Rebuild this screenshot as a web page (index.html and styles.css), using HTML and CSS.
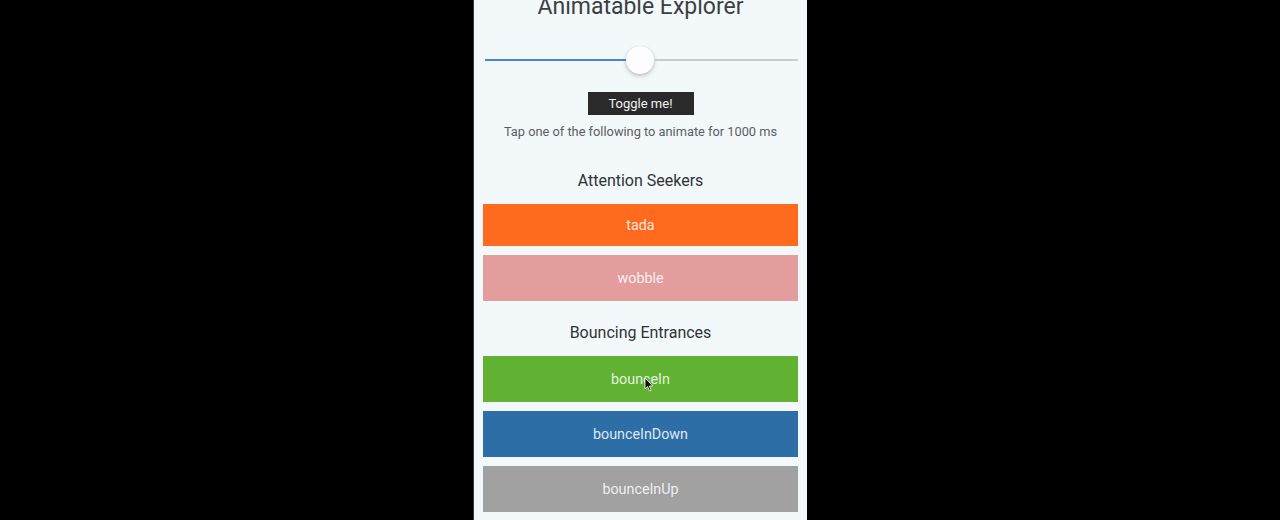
FILE: index.html
```html
<!DOCTYPE html>
<html lang="en">
<head>
    <meta charset="UTF-8">
    <meta name="viewport" content="width=device-width, initial-scale=1.0">
    <title>Animatable Explorer</title>
    <link rel="stylesheet" href="styles.css">
</head>
<body>
    <div class="screen">
        <h1 class="title">Animatable Explorer</h1>

        <div class="slider">
            <div class="track track-on"></div>
            <div class="thumb"></div>
            <div class="track track-off"></div>
        </div>

        <div class="toggle-row">
            <button class="toggle">Toggle me!</button>
        </div>
        <p class="hint">Tap one of the following to animate for 1000 ms</p>

        <h2 class="section">Attention Seekers</h2>
        <div class="anim tada short">tada</div>
        <div class="anim wobble">wobble</div>

        <h2 class="section section-next">Bouncing Entrances</h2>
        <div class="anim bounce-in">
            bounceIn
            <!-- mouse pointer -->
            <svg class="pointer" width="10" height="15" viewBox="0 0 10 15">
                <path d="M1 1 L1 12 L3.6 9.6 L5.6 14 L7.2 13.3 L5.3 9 L8.8 9 Z" fill="#111" stroke="#fff" stroke-width="0.8"/>
            </svg>
        </div>
        <div class="anim bounce-down">bounceInDown</div>
        <div class="anim bounce-up">bounceInUp</div>
    </div>
</body>
</html>
```

FILE: styles.css
```css
body {
    margin: 0;
    background: #000;
    font-family: Roboto, "Liberation Sans", Arial, sans-serif;
    display: flex;
    justify-content: center;
    height: 520px;
    overflow: hidden;
}

.screen {
    width: 334px;
    height: 520px;
    background: #f3f8fb;
    padding: 0 9px 0 9px;
    box-sizing: border-box;
    overflow: hidden;
    border-left: 1px solid #3a3d40;
}

.title {
    margin: -6px 0 0;
    font-size: 23px;
    line-height: 26px;
    font-weight: 400;
    text-align: center;
    color: #3b3f42;
}

/* slider */
.slider {
    display: flex;
    align-items: center;
    height: 28px;
    margin-top: 26px;
    padding: 0 0 0 2px;
}

.track {
    height: 2px;
}

.track-on {
    width: 141px;
    background: #4a86d8;
}

.track-off {
    flex: 1;
    background: #c9ccce;
}

.thumb {
    width: 28px;
    height: 28px;
    border-radius: 50%;
    background: #fbfdfe;
    box-shadow: 0 2px 4px rgba(0, 0, 0, 0.22), 0 0 1px rgba(0, 0, 0, 0.15);
}

.toggle-row {
    display: flex;
    justify-content: center;
    margin-top: 18px;
}

.toggle {
    width: 106px;
    height: 23px;
    padding: 0;
    border: none;
    background: #2a2a2a;
    color: #f2f2f2;
    font-family: inherit;
    font-size: 13px;
    font-weight: 400;
}

.hint {
    margin: 9px 0 0;
    font-size: 12.8px;
    line-height: 16px;
    text-align: center;
    color: #5a5e62;
}

.section {
    margin: 31px 0 13px;
    font-size: 16px;
    line-height: 20px;
    font-weight: 400;
    text-align: center;
    color: #2f3336;
}

.section-next {
    margin-top: 22px;
}

.anim {
    position: relative;
    display: flex;
    align-items: center;
    justify-content: center;
    height: 46px;
    margin-bottom: 9px;
    font-size: 14.3px;
    color: rgba(255, 255, 255, 0.86);
}

.anim.short {
    height: 42px;
}

.tada { background: #fe6a1e; }
.wobble { background: #e29d9c; }
.bounce-in { background: #61b232; }
.bounce-down { background: #2d6ea7; }
.bounce-up { background: #a1a1a1; }

.pointer {
    position: absolute;
    left: 161px;
    top: 21px;
}
```
